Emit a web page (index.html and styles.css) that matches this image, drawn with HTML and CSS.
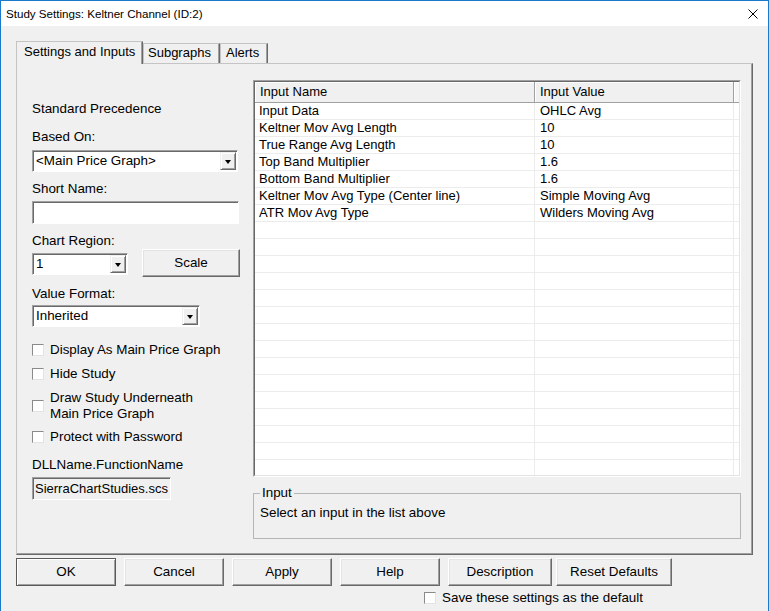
FILE: index.html
```html
<!DOCTYPE html>
<html>
<head>
<meta charset="utf-8">
<title>Study Settings</title>
<link rel="stylesheet" href="styles.css">
</head>
<body>
<div class="window">
  <div class="titlebar">
    <span class="title">Study Settings: Keltner Channel (ID:2)</span>
    <svg class="close" width="10" height="10" viewBox="0 0 10 10"><path d="M0.5 0.5L9.5 9.5M9.5 0.5L0.5 9.5" stroke="#000" stroke-width="1" fill="none"/></svg>
  </div>
  <div class="client">
    <div class="tabs">
      <div class="tab active tab-settings">Settings and Inputs</div>
      <div class="tab tab-subgraphs">Subgraphs</div>
      <div class="tab tab-alerts">Alerts</div>
    </div>
    <div class="panel">
      <div class="left">
        <div class="lbl">Standard Precedence</div>
        <div class="lbl mt-12">Based On:</div>
        <div class="combo w-206 mt-5"><span class="val">&lt;Main Price Graph&gt;</span><span class="arrow"></span></div>
        <div class="lbl mt-9">Short Name:</div>
        <div class="field w-207 mt-4"></div>
        <div class="lbl mt-9">Chart Region:</div>
        <div class="region-row">
          <div class="combo w-96"><span class="val">1</span><span class="arrow"></span></div>
          <div class="btn btn-scale">Scale</div>
        </div>
        <div class="lbl mt-9">Value Format:</div>
        <div class="combo w-168 mt-3"><span class="val">Inherited</span><span class="arrow"></span></div>
        <div class="check mt-15"><span class="box"></span><span>Display As Main Price Graph</span></div>
        <div class="check mt-8"><span class="box"></span><span>Hide Study</span></div>
        <div class="check mt-8"><span class="box"></span><span>Draw Study Underneath<br>Main Price Graph</span></div>
        <div class="check mt-7"><span class="box"></span><span>Protect with Password</span></div>
        <div class="lbl mt-12">DLLName.FunctionName</div>
        <div class="field readonly mt-4">SierraChartStudies.scs</div>
      </div>
      <div class="right">
        <div class="grid">
          <div class="grid-inner">
            <div class="ghead">
              <div class="hc">Input Name</div>
              <div class="hc">Input Value</div>
              <div class="hc hc-end"></div>
            </div>
            <div class="row"><div class="c1">Input Data</div><div class="c2">OHLC Avg</div><div class="c3"></div></div>
            <div class="row"><div class="c1">Keltner Mov Avg Length</div><div class="c2">10</div><div class="c3"></div></div>
            <div class="row"><div class="c1">True Range Avg Length</div><div class="c2">10</div><div class="c3"></div></div>
            <div class="row"><div class="c1">Top Band Multiplier</div><div class="c2">1.6</div><div class="c3"></div></div>
            <div class="row"><div class="c1">Bottom Band Multiplier</div><div class="c2">1.6</div><div class="c3"></div></div>
            <div class="row"><div class="c1">Keltner Mov Avg Type (Center line)</div><div class="c2">Simple Moving Avg</div><div class="c3"></div></div>
            <div class="row"><div class="c1">ATR Mov Avg Type</div><div class="c2">Wilders Moving Avg</div><div class="c3"></div></div>
            <div class="row"><div class="c1"></div><div class="c2"></div><div class="c3"></div></div>
            <div class="row"><div class="c1"></div><div class="c2"></div><div class="c3"></div></div>
            <div class="row"><div class="c1"></div><div class="c2"></div><div class="c3"></div></div>
            <div class="row"><div class="c1"></div><div class="c2"></div><div class="c3"></div></div>
            <div class="row"><div class="c1"></div><div class="c2"></div><div class="c3"></div></div>
            <div class="row"><div class="c1"></div><div class="c2"></div><div class="c3"></div></div>
            <div class="row"><div class="c1"></div><div class="c2"></div><div class="c3"></div></div>
            <div class="row"><div class="c1"></div><div class="c2"></div><div class="c3"></div></div>
            <div class="row"><div class="c1"></div><div class="c2"></div><div class="c3"></div></div>
            <div class="row"><div class="c1"></div><div class="c2"></div><div class="c3"></div></div>
            <div class="row"><div class="c1"></div><div class="c2"></div><div class="c3"></div></div>
            <div class="row"><div class="c1"></div><div class="c2"></div><div class="c3"></div></div>
            <div class="row"><div class="c1"></div><div class="c2"></div><div class="c3"></div></div>
            <div class="row"><div class="c1"></div><div class="c2"></div><div class="c3"></div></div>
            <div class="row"><div class="c1"></div><div class="c2"></div><div class="c3"></div></div>
          </div>
        </div>
        <fieldset class="group">
          <legend>Input</legend>
          <div class="group-text">Select an input in the list above</div>
        </fieldset>
      </div>
    </div>
    <div class="buttons">
      <div class="btn btn-default">OK</div>
      <div class="btn">Cancel</div>
      <div class="btn">Apply</div>
      <div class="btn">Help</div>
      <div class="btn btn-desc">Description</div>
      <div class="btn btn-reset">Reset Defaults</div>
    </div>
    <div class="savebar check"><span class="box"></span><span>Save these settings as the default</span></div>
  </div>
</div>
</body>
</html>
```

FILE: styles.css
```css
* { box-sizing: border-box; }
html, body { margin: 0; padding: 0; }
body {
  font-family: "Liberation Sans", Arial, sans-serif;
  font-size: 13.4px;
  color: #000;
  background: #f0f0f0;
}
.window {
  width: 769px;
  height: 611px;
  border: 1px solid #1979ca;
  border-bottom: none;
  background: #f0f0f0;
  display: flex;
  flex-direction: column;
  overflow: hidden;
}
.titlebar {
  flex: none;
  height: 25px;
  background: #fff;
  display: flex;
  align-items: center;
  justify-content: space-between;
  padding: 0 10px 0 5px;
}
.title { font-size: 11.6px; }
.close { display: block; }
.client { flex: 1; padding: 15px 0 0 15px; }

/* tabs */
.tabs { display: flex; align-items: flex-end; height: 22px; }
.tab {
  height: 20px;
  font-size: 13px;
  line-height: 18px;
  border: 1px solid;
  border-bottom: none;
  border-color: #c4c4c4 #696969 transparent #c4c4c4;
  box-shadow: inset -1px 0 #a0a0a0;
  padding-left: 4px;
  white-space: nowrap;
}
.tab.active {
  height: 23px;
  line-height: 20px;
  margin-bottom: -1px;
  position: relative;
  z-index: 1;
  background: #f0f0f0;
  padding-left: 7px;
}
.tab-settings { width: 127px; }
.tab-subgraphs { width: 77px; }
.tab-alerts { width: 48px; padding-left: 5px; }

/* panel */
.panel {
  width: 737px;
  height: 492px;
  border: 1px solid;
  border-color: #c4c4c4 #696969 #696969 #c4c4c4;
  box-shadow: inset -1px -1px #a0a0a0;
  display: flex;
}
.left {
  width: 236px;
  flex: none;
  padding: 37px 0 0 15px;
  display: flex;
  flex-direction: column;
  align-items: flex-start;
}
.lbl { height: 16px; line-height: 16px; white-space: nowrap; }
.mt-3 { margin-top: 3px; }
.mt-4 { margin-top: 4px; }
.mt-5 { margin-top: 5px; }
.mt-7 { margin-top: 7px; }
.mt-8 { margin-top: 8px; }
.mt-9 { margin-top: 9px; }
.mt-12 { margin-top: 12px; }
.mt-15 { margin-top: 15px; }
.w-96 { width: 96px; }
.w-168 { width: 168px; }
.w-206 { width: 206px; }
.w-207 { width: 207px; }

.combo {
  height: 22px;
  background: #fff;
  border: 1px solid;
  border-color: #a0a0a0 #fff #fff #a0a0a0;
  box-shadow: inset 1px 1px #696969;
  display: flex;
  align-items: center;
  padding: 1px 1px 1px 3px;
}
.combo .val { flex: 1; line-height: 16px; white-space: nowrap; }
.arrow {
  width: 16px;
  height: 18px;
  flex: none;
  background: #f0f0f0;
  border: 1px solid;
  border-color: #f0f0f0 #696969 #696969 #f0f0f0;
  box-shadow: inset 1px 1px #fff, inset -1px -1px #a0a0a0;
  display: flex;
  align-items: center;
  justify-content: center;
}
.arrow::after {
  content: "";
  border-left: 3.5px solid transparent;
  border-right: 3.5px solid transparent;
  border-top: 4px solid #000;
  margin-top: 1px;
}
.field {
  height: 23px;
  background: #fff;
  border: 1px solid;
  border-color: #a0a0a0 #fff #fff #a0a0a0;
  box-shadow: inset 1px 1px #696969;
}
.field.readonly {
  width: 139px;
  background: #f0f0f0;
  padding: 0 0 0 2px;
  font-size: 13px;
  line-height: 21px;
  white-space: nowrap;
  overflow: hidden;
}
.region-row {
  display: flex;
  align-items: flex-start;
  gap: 14px;
}
.region-row .combo { margin-top: 4px; }

.check { display: flex; align-items: center; gap: 6px; line-height: 16px; white-space: nowrap; }
.box {
  width: 12px;
  height: 12px;
  flex: none;
  background: #fff;
  border: 1px solid;
  border-color: #8a8a8a #e3e3e3 #e3e3e3 #8a8a8a;
}

/* buttons */
.btn {
  width: 100px;
  height: 28px;
  line-height: 26px;
  text-align: center;
  background: #f0f0f0;
  border: 1px solid;
  border-color: #fff #696969 #696969 #fff;
  box-shadow: inset -1px -1px #a0a0a0, inset 1px 1px #e3e3e3;
  white-space: nowrap;
}
.btn-scale { width: 98px; }
.btn-default {
  border-color: #5a5a5a;
  box-shadow: inset 1px 1px #fff, inset -1px -1px #a0a0a0;
}
.buttons { display: flex; gap: 8px; margin-top: 3px; }
.btn-desc { width: 104px; }
.btn-reset { width: 116px; margin-left: -4px; }
.savebar { margin: 4px 0 0 408px; }

/* grid */
.right { width: 488px; flex: none; padding-top: 16px; }
.grid {
  height: 397px;
  border: 1px solid;
  border-color: #a0a0a0 #fff #fff #a0a0a0;
}
.grid-inner {
  height: 100%;
  border: 1px solid;
  border-color: #696969 #e3e3e3 #e3e3e3 #696969;
  background: #fff;
  overflow: hidden;
  font-size: 13px;
}
.ghead, .row {
  display: grid;
  grid-template-columns: 280px 199px 5px;
}
.ghead {
  height: 21px;
  background: #f0f0f0;
  border-bottom: 1px solid #a0a0a0;
}
.hc {
  line-height: 20px;
  padding-left: 5px;
  border-right: 1px solid #a0a0a0;
  box-shadow: inset 1px 1px #fff;
  white-space: nowrap;
}
.hc-end { border-right: none; background: #f7f7f7; }
.row {
  height: 17px;
  border-bottom: 1px solid #ececec;
}
.row > div {
  line-height: 16px;
  white-space: nowrap;
  overflow: hidden;
  border-right: 1px solid #ececec;
}
.row .c1 { padding-left: 4px; }
.row .c2 { padding-left: 5px; }
.row .c3 { border-right: none; }

.group {
  margin: 8px 0 0;
  height: 54px;
  border: 1px solid #b5b5b5;
  padding: 4px 6px 0;
  min-width: 0;
}
.group legend { padding: 0 2px; line-height: 16px; }
.group-text { line-height: 16px; }
```
